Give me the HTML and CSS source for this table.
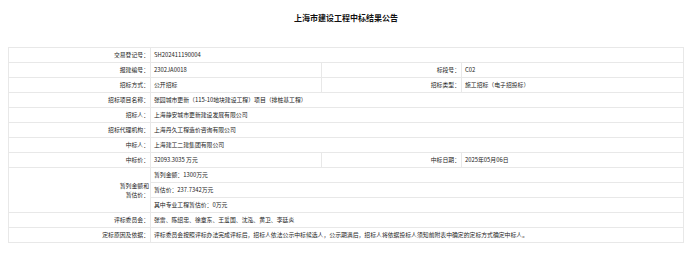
FILE: index.html
```html
<!DOCTYPE html>
<html lang="zh-CN">
<head>
<meta charset="utf-8">
<title>上海市建设工程中标结果公告</title>
<link rel="stylesheet" href="styles.css">
</head>
<body>
<div class="title">上海市建设工程中标结果公告</div>
<table class="info">
  <colgroup>
    <col class="c1"><col class="c2"><col class="c3"><col class="c4">
  </colgroup>
  <tr><td class="lbl">交易登记号：</td><td class="val" colspan="3">SH202411190004</td></tr>
  <tr><td class="lbl">报建编号：</td><td class="val">2302JA0018</td><td class="lbl">标段号：</td><td class="val">C02</td></tr>
  <tr><td class="lbl">招标方式：</td><td class="val">公开招标</td><td class="lbl">招标类型：</td><td class="val">施工招标（电子招投标）</td></tr>
  <tr><td class="lbl">招标项目名称：</td><td class="val" colspan="3">张园城市更新（115-10地块建设工程）项目（排桩基工程）</td></tr>
  <tr><td class="lbl">招标人：</td><td class="val" colspan="3">上海静安城市更新建设发展有限公司</td></tr>
  <tr><td class="lbl">招标代理机构：</td><td class="val" colspan="3">上海丹久工程造价咨询有限公司</td></tr>
  <tr><td class="lbl">中标人：</td><td class="val" colspan="3">上海建工二建集团有限公司</td></tr>
  <tr><td class="lbl">中标价：</td><td class="val">32093.3035 万元</td><td class="lbl">中标日期：</td><td class="val">2025年05月06日</td></tr>
  <tr><td class="lbl multi" rowspan="3">暂列金额和<br>暂估价：</td><td class="val" colspan="3">暂列金额：1300万元</td></tr>
  <tr><td class="val" colspan="3">暂估价：237.7342万元</td></tr>
  <tr><td class="val" colspan="3">其中专业工程暂估价：0万元</td></tr>
  <tr><td class="lbl">评标委员会：</td><td class="val" colspan="3">张雷、陈绍忠、徐章东、王爱国、沈泓、黄卫、李廷炎</td></tr>
  <tr><td class="lbl">定标原因及依据：</td><td class="val" colspan="3">评标委员会按照评标办法完成评标后，招标人依法公示中标候选人，公示期满后，招标人将依据投标人须知前附表中确定的定标方式确定中标人。</td></tr>
</table>
</body>
</html>
```

FILE: styles.css
```css
html, body {
  margin: 0;
  padding: 0;
  background: #ffffff;
}
body {
  margin: 8px;
  font-family: "Noto Sans CJK SC", "Noto Sans", sans-serif;
  color: #222222;
}
.title {
  height: 20px;
  line-height: 20px;
  text-align: center;
  font-size: 8px;
  font-weight: bold;
  color: #111111;
  margin-bottom: 19px;
}
.info {
  width: 675px;
  border-collapse: collapse;
  table-layout: fixed;
  font-size: 5.85px;
  border: 1px solid #e2e2e2;
}
.c1 { width: 142px; }
.c2 { width: 171px; }
.c3 { width: 140px; }
.c4 { width: 222px; }
.info td {
  border: 1px solid #e8e8e8;
  height: 14px;
  line-height: 14px;
  padding: 0;
  white-space: nowrap;
  overflow: hidden;
}
.info td.lbl {
  text-align: right;
  padding-right: 1px;
}
.info td.val {
  text-align: left;
  padding-left: 3px;
}
.info td.multi {
  line-height: 9px;
  white-space: normal;
}
```
